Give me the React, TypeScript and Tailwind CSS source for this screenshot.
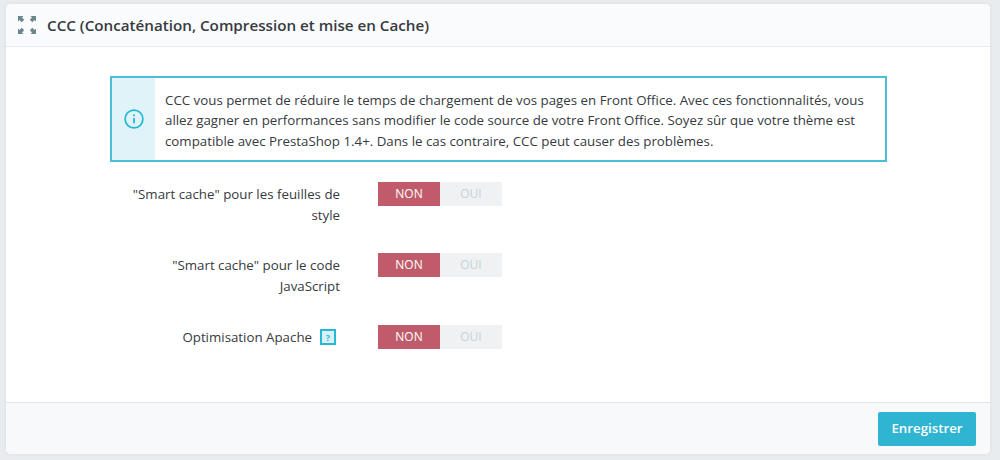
const FONT = "font-['Open_Sans',sans-serif]";

function ExpandIcon() {
  return (
    <svg width="18" height="18" viewBox="0 0 18 18" fill="#6c868e" className="shrink-0">
      <path d="M0 0h5.5L4 1.5l2.2 2.2-2.5 2.5L1.5 4 0 5.5z" />
      <path d="M18 0h-5.5L14 1.5l-2.2 2.2 2.5 2.5L16.5 4 18 5.5z" />
      <path d="M0 18h5.5L4 16.5l2.2-2.2-2.5-2.5L1.5 14 0 12.5z" />
      <path d="M18 18h-5.5l1.5-1.5-2.2-2.2 2.5-2.5 2.2 2.2 1.5-1.5z" />
    </svg>
  );
}

function InfoIcon() {
  return (
    <svg width="20" height="20" viewBox="0 0 20 20" fill="none" stroke="#25b9d7">
      <circle cx="10" cy="10" r="8.9" strokeWidth="1.7" />
      <path d="M10 9v5.2" strokeWidth="1.8" />
      <path d="M10 5.4v1.8" strokeWidth="1.8" />
    </svg>
  );
}

function Toggle() {
  return (
    <div className="flex h-6 w-[124px] text-xs">
      <div className="flex w-[62px] items-center justify-center bg-[#bf5b6a] text-white">NON</div>
      <div className="flex w-[62px] items-center justify-center bg-[#eff1f2] text-[#c5d3d9]">OUI</div>
    </div>
  );
}

function Row({ label, help, className }: { label: string[]; help?: boolean; className: string }) {
  return (
    <div className={`flex items-start gap-[38px] ${className}`}>
      <div className="w-[230px] text-right text-[13.3px] leading-[20.5px] text-[#363a41]">
        {label.map((line) => (
          <div key={line} className="flex h-[20.5px] translate-y-[2px] items-center justify-end">
            {line}
            {help && (
              <span className="mr-1 ml-2 flex h-4 w-4 items-center justify-center border-2 border-[#25b9d7] bg-[#d9f1f6] text-[9px] leading-none font-bold text-[#25b9d7]">
                ?
              </span>
            )}
          </div>
        ))}
      </div>
      <Toggle />
    </div>
  );
}

export default function App() {
  return (
    <div className={`${FONT} h-[460px] w-[1000px] overflow-hidden bg-[#e9ecee] pt-1 pr-[10px] pb-[6px] pl-[6px]`}>
      <div className="flex h-full flex-col rounded-[5px] bg-white shadow-[0_0_4px_rgba(0,0,0,0.06)]">
        <div className="flex h-[43px] shrink-0 items-center gap-[11px] rounded-t-[5px] border-b border-[#e3ecee] bg-[#fafbfc] pl-3">
          <ExpandIcon />
          <h1 className="text-[15.2px] font-semibold text-[#363a41]">
            CCC (Concaténation, Compression et mise en Cache)
          </h1>
        </div>

        <div className="flex-1 pt-[29px] pl-[104px]">
          <div className="flex h-[86px] w-[777px] border-2 border-[#4cbdd8]">
            <div className="flex w-[43px] shrink-0 items-center justify-center bg-[#dff3f8]">
              <InfoIcon />
            </div>
            <p className="pt-3 pl-[10px] text-[13.3px] leading-[20.4px] text-[#363a41]">
              CCC vous permet de réduire le temps de chargement de vos pages en Front Office. Avec ces fonctionnalités, vous
              <br />
              allez gagner en performances sans modifier le code source de votre Front Office. Soyez sûr que votre thème est
              <br />
              compatible avec PrestaShop 1.4+. Dans le cas contraire, CCC peut causer des problèmes.
            </p>
          </div>
          <Row label={['"Smart cache" pour les feuilles de', "style"]} className="mt-5" />
          <Row label={['"Smart cache" pour le code', "JavaScript"]} className="mt-[30px]" />
          <Row label={["Optimisation Apache"]} help className="mt-[31px]" />
        </div>

        <div className="flex h-[52px] shrink-0 items-center justify-end rounded-b-[5px] border-t border-[#dfe7ea] bg-[#f8f9fb] pr-[14px]">
          <button className="h-[34px] w-[98px] rounded-[2px] bg-[#2fb5d2] text-[13.3px] font-semibold text-white">
            Enregistrer
          </button>
        </div>
      </div>
    </div>
  );
}
